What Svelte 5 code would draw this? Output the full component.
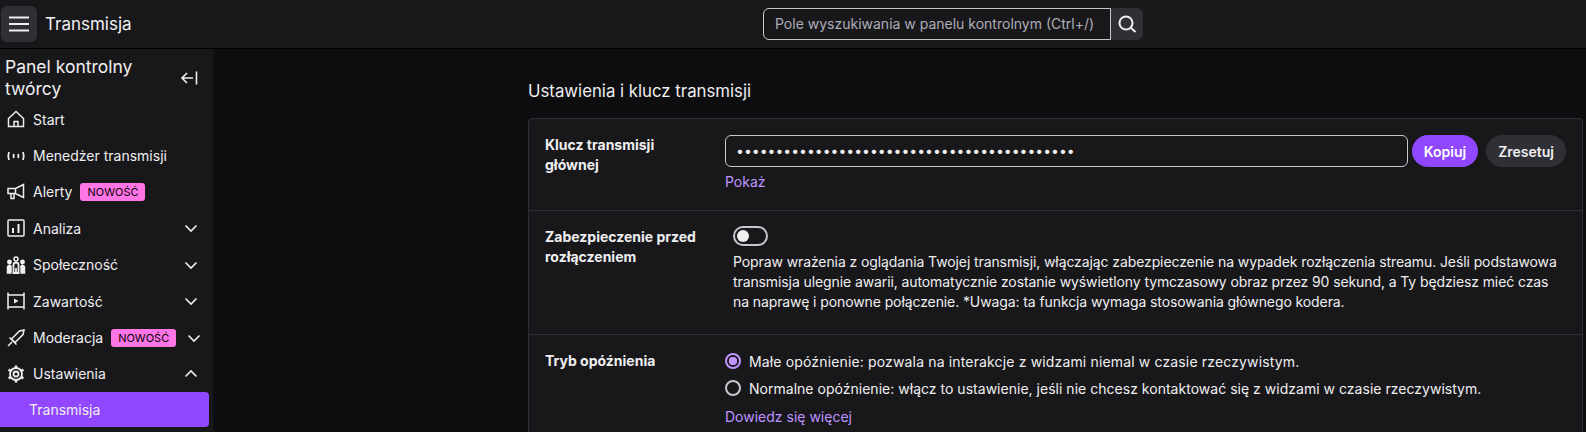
<script>
  const nav = [
    { label: 'Start', icon: 'home' },
    { label: 'Menedżer transmisji', icon: 'live' },
    { label: 'Alerty', icon: 'alert', badge: true },
    { label: 'Analiza', icon: 'stats', chevron: 'down' },
    { label: 'Społeczność', icon: 'people', chevron: 'down' },
    { label: 'Zawartość', icon: 'content', chevron: 'down' },
    { label: 'Moderacja', icon: 'sword', chevron: 'down', badge: true },
    { label: 'Ustawienia', icon: 'gear', chevron: 'up' }
  ];
</script>

<div class="page">
  <header class="topbar">
    <button class="menu" aria-label="Menu">
      <svg width="20" height="20" viewBox="0 0 20 20"><path d="M0 3.500h20M0 10h20M0 16.500h20" stroke="#efeff1" stroke-width="2" /></svg>
    </button>
    <span class="title">Transmisja</span>
    <div class="search">
      <div class="search-input">Pole wyszukiwania w panelu kontrolnym (Ctrl+/)</div>
      <button class="search-btn" aria-label="Szukaj">
        <svg width="20" height="20" viewBox="0 0 20 20" fill="none" stroke="#efeff1" stroke-width="2"><circle cx="9" cy="9" r="6.500" /><path d="M14 14l4.500 4" /></svg>
      </button>
    </div>
  </header>

  <div class="body">
    <aside class="sidebar">
      <div class="side-head">
        <h2>Panel kontrolny twórcy</h2>
        <svg class="collapse" width="20" height="20" viewBox="0 0 20 20" fill="none" stroke="#efeff1" stroke-width="1.600"><path d="M17.500 3.500v13M14 10H3M8 5l-5 5 5 5" /></svg>
      </div>
      <nav>
        {#each nav as item}
          <div class="nav-item">
            <svg class="nav-icon" width="20" height="20" viewBox="0 0 20 20" fill="none" stroke="#efeff1" stroke-width="1.500">
              {#if item.icon === 'home'}
                <path d="M2.500 9.500L10 2.500l7.500 7v8h-15zM8 17.500v-5h4v5" />
              {:else if item.icon === 'live'}
                <path stroke-width="1.800" d="M3 6c-1 2.500-1 5.500 0 8M17 6c1 2.500 1 5.500 0 8M8 8c-.7 1.300-.7 2.700 0 4M12 8c.7 1.300.7 2.700 0 4" />
              {:else if item.icon === 'alert'}
                <path d="M2 6.500h7.500L17.500 2.500v13l-8-4H2zM5 11.500v5h3v-5M9.500 6.500v5" />
              {:else if item.icon === 'stats'}
                <rect x="2" y="2" width="16" height="16" rx="1" />
                <path d="M7 10v5M12.500 6v9" stroke-width="2" />
              {:else if item.icon === 'people'}
                <circle cx="10" cy="4" r="2" />
                <circle cx="3.500" cy="7" r="1.700" fill="#efeff1" />
                <circle cx="16.500" cy="7" r="1.700" fill="#efeff1" />
                <path d="M7.500 18v-8a2.500 2.500 0 0 1 5 0v8zM10 13v5" stroke-width="1.800" />
                <path d="M1.500 18v-6a2 2 0 0 1 3.500-1v7zM18.500 18v-6a2 2 0 0 0-3.500-1v7z" fill="#efeff1" />
              {:else if item.icon === 'content'}
                <path d="M2 1.500v17M18 1.500v17M2 4h16M2 16h16" />
                <path d="M8 7.500v5l4.500-2.500z" fill="#efeff1" stroke="none" />
              {:else if item.icon === 'sword'}
                <path d="M18 2l-1 4.500-8 8L5.500 11l8-8zM3.500 9.500l7 7M6 14l-4 4" />
              {:else}
                <circle cx="10" cy="10" r="6" stroke-width="1.800" />
                <circle cx="10" cy="10" r="2.500" stroke-width="1.800" />
                <path stroke-width="2.500" d="M10 4V1.500M10 16v2.500M4.800 7L2.600 5.700M15.200 7l2.200-1.300M4.800 13l-2.200 1.300M15.200 13l2.200 1.300" />
              {/if}
            </svg>
            <span>{item.label}</span>
            {#if item.badge}<span class="badge">NOWOŚĆ</span>{/if}
            {#if item.chevron}
              <svg class="chevron" class:narrow={item.badge} width="14" height="14" viewBox="0 0 14 14" fill="none" stroke="#efeff1" stroke-width="1.600">
                <path d={item.chevron === 'down' ? 'M1.500 4.500L7 10l5.500-5.500' : 'M1.500 9.500L7 4l5.500 5.500'} />
              </svg>
            {/if}
          </div>
        {/each}
        <div class="nav-active">Transmisja</div>
      </nav>
    </aside>

    <main class="content">
      <h3>Ustawienia i klucz transmisji</h3>
      <section class="card">
        <div class="row row-key">
          <div class="label">Klucz transmisji głównej</div>
          <div class="field">
            <div class="key-line">
              <div class="key-input">•••••••••••••••••••••••••••••••••••••••••••</div>
              <button class="btn primary">Kopiuj</button>
              <button class="btn secondary">Zresetuj</button>
            </div>
            <span class="link">Pokaż</span>
          </div>
        </div>
        <div class="row row-disconnect">
          <div class="label">Zabezpieczenie przed rozłączeniem</div>
          <div class="field indent">
            <div class="toggle"><span></span></div>
            <p>Popraw wrażenia z oglądania Twojej transmisji, włączając zabezpieczenie na wypadek rozłączenia streamu. Jeśli podstawowa transmisja ulegnie awarii, automatycznie zostanie wyświetlony tymczasowy obraz przez 90 sekund, a Ty będziesz mieć czas na naprawę i ponowne połączenie. *Uwaga: ta funkcja wymaga stosowania głównego kodera.</p>
          </div>
        </div>
        <div class="row">
          <div class="label">Tryb opóźnienia</div>
          <div class="field">
            <div class="radio-line"><span class="radio on"></span>Małe opóźnienie: pozwala na interakcje z widzami niemal w czasie rzeczywistym.</div>
            <div class="radio-line"><span class="radio"></span>Normalne opóźnienie: włącz to ustawienie, jeśli nie chcesz kontaktować się z widzami w czasie rzeczywistym.</div>
            <span class="link">Dowiedz się więcej</span>
          </div>
        </div>
      </section>
    </main>
  </div>
</div>

<style>
  :global(body) {
    margin: 0;
    background: #0e0e10;
    overflow: hidden;
  }

  .page {
    height: 432px;
    overflow: hidden;
    display: flex;
    flex-direction: column;
    color: #efeff1;
    font-family: Inter, "Noto Sans", sans-serif;
    font-size: 14px;
  }

  button {
    border: 0;
    padding: 0;
    color: inherit;
    font: inherit;
  }

  .topbar {
    height: 49px;
    flex: none;
    display: flex;
    align-items: center;
    position: relative;
    box-sizing: border-box;
    background: #18181b;
    border-bottom: 1px solid #000;
    padding-left: 1px;
  }

  .menu {
    width: 36px;
    height: 36px;
    border-radius: 6px;
    background: #2f2f35;
    display: flex;
    align-items: center;
    justify-content: center;
  }

  .title {
    margin: -1px 0 0 8px;
    font-size: 17px;
  }

  .search {
    display: flex;
    position: absolute;
    left: 763px;
    top: 8px;
  }

  .search-input {
    width: 348px;
    height: 32px;
    box-sizing: border-box;
    border: 1px solid #c8c8cc;
    border-radius: 6px 0 0 6px;
    padding-left: 11px;
    line-height: 30px;
    color: #adadb8;
    white-space: nowrap;
  }

  .search-btn {
    width: 32px;
    height: 32px;
    background: #2f2f35;
    border-radius: 0 6px 6px 0;
    display: flex;
    align-items: center;
    justify-content: center;
  }

  .body {
    flex: 1;
    display: flex;
    min-height: 0;
  }

  .sidebar {
    width: 213px;
    flex: none;
    background: #18181b;
  }

  .side-head {
    display: flex;
    align-items: center;
    justify-content: space-between;
    padding: 7px 14px 1px 5px;
  }

  .side-head h2 {
    margin: 0;
    width: 150px;
    font-size: 17.500px;
    font-weight: 400;
    line-height: 22px;
  }

  .nav-item {
    height: 36.400px;
    display: flex;
    align-items: center;
    padding: 0 15px 0 6px;
  }

  .nav-icon {
    flex: none;
    margin-right: 7px;
  }

  .badge {
    margin-left: 8px;
    padding: 0 7px;
    height: 18px;
    line-height: 18px;
    background: #ff75e6;
    color: #000;
    font-size: 11px;
    border-radius: 3px;
  }

  .chevron {
    margin-left: auto;
  }

  .chevron.narrow {
    margin-right: -3px;
  }

  .nav-active {
    height: 35px;
    width: 209px;
    box-sizing: border-box;
    padding-left: 29px;
    line-height: 35px;
    background: #9147ff;
    border-radius: 0 4px 4px 0;
  }

  .content {
    flex: 1;
    padding: 31px 3px 0 315px;
    min-width: 0;
  }

  h3 {
    margin: 0 0 16px;
    font-size: 16.800px;
    font-weight: 400;
    line-height: 22px;
  }

  .card {
    border: 1px solid #2f2f35;
    border-radius: 4px;
    background: #18181b;
  }

  .row {
    display: flex;
    padding: 16px;
    border-top: 1px solid #2f2f35;
  }

  .row:first-child {
    border-top: 0;
  }

  .row-key {
    height: 91px;
    box-sizing: border-box;
  }

  .row-disconnect {
    height: 124px;
    box-sizing: border-box;
  }

  .label {
    width: 180px;
    flex: none;
    box-sizing: border-box;
    padding-right: 20px;
    font-weight: 700;
    line-height: 20px;
  }

  .field {
    flex: 1;
    min-width: 0;
  }

  .indent {
    padding-left: 8px;
  }

  .key-line {
    display: flex;
    align-items: center;
    gap: 8px;
  }

  .key-input {
    flex: 1;
    height: 32px;
    box-sizing: border-box;
    margin-right: -4px;
    border: 1px solid #c8c8cc;
    border-radius: 6px;
    padding-left: 10px;
    line-height: 30px;
    overflow: hidden;
    white-space: nowrap;
  }

  .btn {
    height: 32px;
    border-radius: 16px;
    font-weight: 600;
    padding: 0 12px;
  }

  .primary {
    background: #9147ff;
    color: #fff;
  }

  .secondary {
    background: #2f2f35;
  }

  .link {
    display: block;
    color: #bf94ff;
    line-height: 20px;
    margin-top: 5px;
  }

  .toggle {
    width: 35px;
    height: 20px;
    box-sizing: border-box;
    border: 2px solid #c8c8cc;
    border-radius: 10px;
    padding: 2px;
    margin-top: -1px;
  }

  .toggle span {
    display: block;
    width: 12px;
    height: 12px;
    border-radius: 50%;
    background: #efeff1;
  }

  p {
    margin: 6px 0 0;
    line-height: 20px;
    letter-spacing: -0.100px;
  }

  .radio-line {
    display: flex;
    align-items: center;
    height: 28px;
    margin-top: -4px;
    white-space: nowrap;
    letter-spacing: 0.150px;
  }

  .radio-line + .radio-line {
    margin-top: -1px;
    letter-spacing: 0.020px;
  }

  .radio {
    width: 16px;
    height: 16px;
    box-sizing: border-box;
    border: 2px solid #c8c8cc;
    border-radius: 50%;
    margin-right: 8px;
    flex: none;
  }

  .radio.on {
    border-color: #bf94ff;
    background: radial-gradient(circle, #bf94ff 0 4px, transparent 4.500px);
  }
</style>
